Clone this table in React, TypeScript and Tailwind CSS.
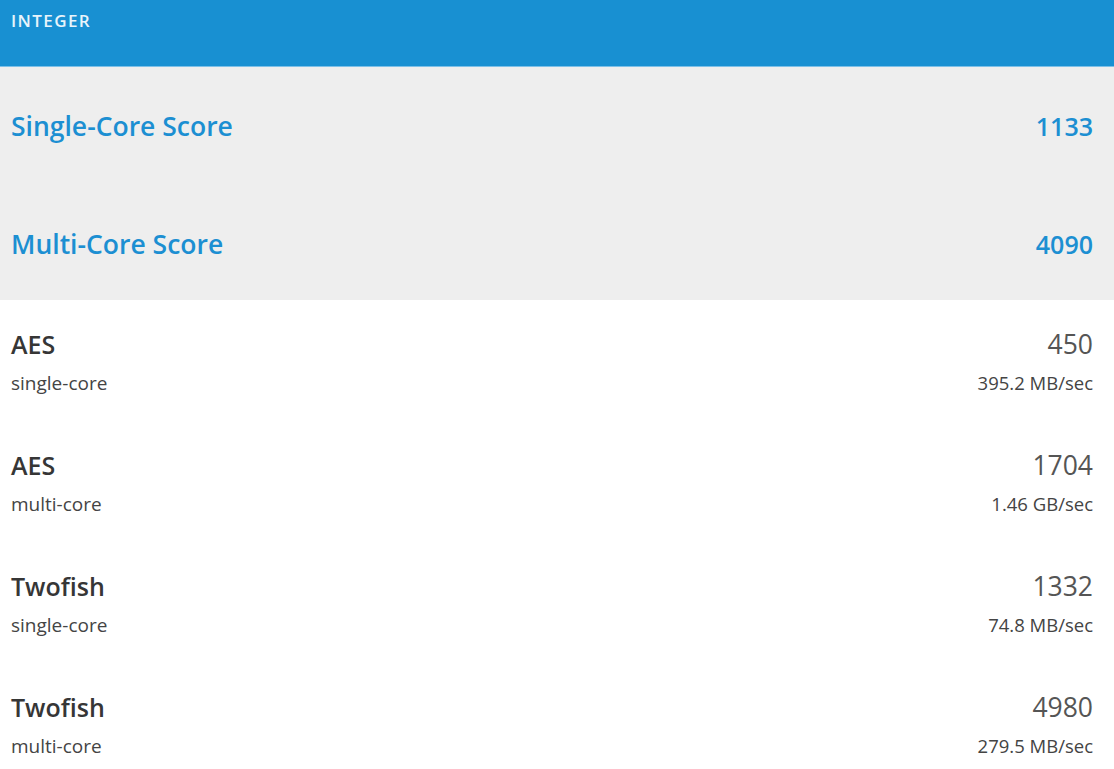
import React from "react";

const scores = [
  { label: "Single-Core Score", value: "1133" },
  { label: "Multi-Core Score", value: "4090" },
];

const rows = [
  { name: "AES", sub: "single-core", score: "450", rate: "395.2 MB/sec" },
  { name: "AES", sub: "multi-core", score: "1704", rate: "1.46 GB/sec" },
  { name: "Twofish", sub: "single-core", score: "1332", rate: "74.8 MB/sec" },
  { name: "Twofish", sub: "multi-core", score: "4980", rate: "279.5 MB/sec" },
];

export default function App() {
  return (
    <div
      className="w-[1114px] h-[769px] overflow-hidden bg-white"
      style={{ fontFamily: '"Open Sans", "Noto Sans", sans-serif' }}
    >
      <div className="h-[67px] bg-[#1890d2] border-b border-[#7cc0e8] px-[11px] pt-[9px]">
        <div className="text-[17px] font-semibold tracking-[1.4px] text-[#e8f4fb] leading-[24px]">
          INTEGER
        </div>
      </div>
      <div className="bg-[#eeeeee] h-[233px] pt-[1px] flex flex-col overflow-hidden">
        {scores.map((s) => (
          <div
            key={s.label}
            className="h-[118px] shrink-0 flex items-center justify-between pl-[11px] pr-[21px] text-[#1c8fd2] text-[26.5px] font-semibold"
          >
            <span>{s.label}</span>
            <span className="text-[25px]">{s.value}</span>
          </div>
        ))}
      </div>
      <div className="flex flex-col">
        {rows.map((r, i) => (
          <div
            key={i}
            className="h-[121px] shrink-0 pt-[27px] pl-[11px] pr-[21px] flex justify-between"
          >
            <div className="flex flex-col">
              <span className="text-[25px] leading-[34px] font-semibold text-[#363636]">
                {r.name}
              </span>
              <span className="text-[19px] leading-[24px] mt-[10px] text-[#444]">
                {r.sub}
              </span>
            </div>
            <div className="flex flex-col items-end">
              <span className="text-[26.5px] leading-[34px] text-[#555]">
                {r.score}
              </span>
              <span className="text-[18.5px] leading-[24px] mt-[10px] text-[#444]">
                {r.rate}
              </span>
            </div>
          </div>
        ))}
      </div>
    </div>
  );
}
